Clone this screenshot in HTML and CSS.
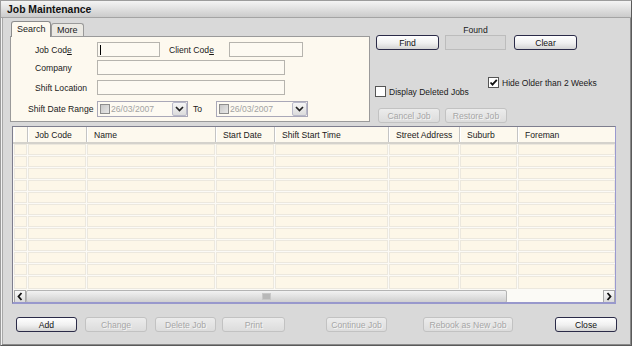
FILE: index.html
```
<!DOCTYPE html>
<html lang="en">
<head>
	<meta charset="UTF-8">
	<title>Job Maintenance</title>
	<link rel="stylesheet" href="styles.css">
</head>
<body>
	<div class="win">
		<div class="title">Job Maintenance</div>
		<div class="top">
			<div class="tabs">
				<div class="tabstrip">
					<span class="tab on">Search</span>
					<span class="tab">More</span>
				</div>
				<div class="panel">
					<div class="row r1">
						<span class="lbl">Job Cod<u>e</u></span>
						<span class="inp w63"><i class="caret"></i></span>
						<span class="lbl2">Client Cod<u>e</u></span>
						<span class="inp w74"></span>
					</div>
					<div class="row r2">
						<span class="lbl">Company</span>
						<span class="inp w188"></span>
					</div>
					<div class="row r3">
						<span class="lbl">Shift Location</span>
						<span class="inp w188"></span>
					</div>
					<div class="row r4">
						<span class="lbl wide">Shift Date Range</span>
						<span class="date w91">
							<i class="dchk"></i><span class="dtxt">26/03/2007</span>
							<span class="ddbtn"><svg width="9" height="6" viewBox="0 0 9 6"><path d="M1 1l3.5 3.5L8 1" stroke="#222" stroke-width="1.7" fill="none"/></svg></span>
						</span>
						<span class="to">To</span>
						<span class="date w92">
							<i class="dchk"></i><span class="dtxt">26/03/2007</span>
							<span class="ddbtn"><svg width="9" height="6" viewBox="0 0 9 6"><path d="M1 1l3.5 3.5L8 1" stroke="#222" stroke-width="1.7" fill="none"/></svg></span>
						</span>
					</div>
				</div>
			</div>
			<div class="side">
				<div class="found-lbl">Found</div>
				<div class="btnrow">
					<span class="btn w63">Find</span>
					<span class="foundbox"></span>
					<span class="btn w63 clear">Clear</span>
				</div>
				<div class="chkrow">
					<span class="chk deleted"><i class="box"></i>Display Deleted Jobs</span>
					<span class="chk older"><i class="box"><svg width="9" height="9" viewBox="0 0 9 9"><path d="M1.5 4.5l2 2.2L7.8 1.8" stroke="#111" stroke-width="1.8" fill="none"/></svg></i>Hide Older than 2 Weeks</span>
				</div>
				<div class="btnrow2">
					<span class="btn off w62">Cancel Job</span>
					<span class="btn off w62 restore">Restore Job</span>
				</div>
			</div>
		</div>

		<div class="grid">
			<table class="gt">
				<colgroup>
					<col style="width:14px"><col style="width:59px"><col style="width:129px"><col style="width:59px">
					<col style="width:114px"><col style="width:71px"><col style="width:58px"><col style="width:98px">
				</colgroup>
				<thead>
					<tr><th></th><th>Job Code</th><th>Name</th><th>Start Date</th><th>Shift Start Time</th><th>Street Address</th><th>Suburb</th><th>Foreman</th></tr>
				</thead>
				<tbody>
					<tr><td></td><td></td><td></td><td></td><td></td><td></td><td></td><td></td></tr>
					<tr><td></td><td></td><td></td><td></td><td></td><td></td><td></td><td></td></tr>
					<tr><td></td><td></td><td></td><td></td><td></td><td></td><td></td><td></td></tr>
					<tr><td></td><td></td><td></td><td></td><td></td><td></td><td></td><td></td></tr>
					<tr><td></td><td></td><td></td><td></td><td></td><td></td><td></td><td></td></tr>
					<tr><td></td><td></td><td></td><td></td><td></td><td></td><td></td><td></td></tr>
					<tr><td></td><td></td><td></td><td></td><td></td><td></td><td></td><td></td></tr>
					<tr><td></td><td></td><td></td><td></td><td></td><td></td><td></td><td></td></tr>
					<tr><td></td><td></td><td></td><td></td><td></td><td></td><td></td><td></td></tr>
					<tr><td></td><td></td><td></td><td></td><td></td><td></td><td></td><td></td></tr>
					<tr><td></td><td></td><td></td><td></td><td></td><td></td><td></td><td></td></tr>
					<tr><td></td><td></td><td></td><td></td><td></td><td></td><td></td><td></td></tr>
				</tbody>
			</table>
			<div class="hscroll">
				<span class="arrow"><svg width="8" height="9" viewBox="0 0 8 9"><path d="M5.5 1L2.5 4.5L5.5 8" stroke="#111" stroke-width="1.8" fill="none"/></svg></span>
				<span class="thumb"><i class="grip"></i></span>
				<span class="track"></span>
				<span class="arrow"><svg width="8" height="9" viewBox="0 0 8 9"><path d="M2.5 1L5.5 4.5L2.5 8" stroke="#111" stroke-width="1.8" fill="none"/></svg></span>
			</div>
		</div>

		<div class="foot">
			<span class="btn w61">Add</span>
			<span class="btn off w62 b-change">Change</span>
			<span class="btn off w61 b-delete">Delete Job</span>
			<span class="btn off w63 b-print">Print</span>
			<span class="btn off w61 b-continue">Continue Job</span>
			<span class="btn off w90 b-rebook">Rebook as New Job</span>
			<span class="btn w62 b-close">Close</span>
		</div>
	</div>
</body>
</html>
```

FILE: styles.css
```
*{
	margin:0px;
	padding:0px;
}
body{
	font:8.6px "Liberation Sans", Arial, sans-serif;
	color:#1a1a1a;
	background:#d8d8d8;
}
.win{
	width:632px;
	height:346px;
	box-sizing:border-box;
	background:#d9d9d9;
	border:1px solid #9c9c9c;
	border-right-color:#5a5a5a;
	border-bottom-color:#5a5a5a;
	box-shadow:inset 1px 1px 0 #f2f2f2, inset -1px -1px 0 #8a8a8a, inset 2px 0 0 #a8a8a8;
	overflow:hidden;
}
.title{
	height:16px;
	line-height:17px;
	padding-left:6px;
	font-size:10.4px;
	font-weight:bold;
	color:#111;
	background:linear-gradient(#f4f4f4, #e2e2e2 45%, #cbcbcb);
	border-bottom:1px solid #a4a4a4;
}

/* top part */
.top{
	display:flex;
	height:108px;
	box-sizing:border-box;
	padding:3px 0 0 9px;
}
.tabs{
	width:360px;
}
.tabstrip{
	display:flex;
	align-items:flex-end;
	height:15px;
	padding-left:1px;
}
.tab{
	height:12px;
	line-height:13px;
	padding:0 5px;
	border:1px solid #9a9a9a;
	border-bottom:none;
	border-radius:3px 3px 0 0;
	background:#ebe9e3;
	font-size:9px;
}
.tab.on{
	height:15px;
	line-height:14px;
	width:28px;
	background:#fdf9ef;
	position:relative;
	z-index:1;
	margin-bottom:-1px;
	border-color:#8c8c8c;
}
.panel{
	height:86px;
	box-sizing:border-box;
	border:1px solid #9a9a9a;
	background:#fdf9ef;
	padding-top:5px;
}
.row{
	display:flex;
	align-items:center;
	height:15px;
}
.r2{ margin-top:3px; }
.r3{ margin-top:5px; }
.r4{ margin-top:6px; }
.lbl{
	width:62px;
	padding-left:24px;
	white-space:nowrap;
}
.lbl.wide{
	width:69px;
	padding-left:17px;
}
.lbl2{
	width:60px;
	margin-left:9px;
	white-space:nowrap;
}
u{
	text-decoration:underline;
}
.inp{
	display:block;
	height:15px;
	box-sizing:border-box;
	border:1px solid #b6b4ae;
	background:#fdfaf2;
}
.caret{
	display:block;
	width:1px;
	height:10px;
	margin:2px 0 0 2px;
	background:#000;
}
.w63{ width:63px; }
.w74{ width:74px; }
.w188{ width:188px; }
.w91{ width:91px; }
.w92{ width:92px; }
.w62{ width:62px; }
.w61{ width:61px; }
.w90{ width:90px; }

.date{
	display:flex;
	align-items:center;
	height:16px;
	box-sizing:border-box;
	border:1px solid #a9a8b8;
	background:#fdfaf2;
	padding-left:2px;
}
.dchk{
	display:block;
	width:8px;
	height:8px;
	border:1px solid #8e8e8e;
	background:linear-gradient(135deg, #c8c8c8, #e8e8e8);
}
.dtxt{
	flex:1;
	color:#a3a3a3;
	padding-left:1px;
}
.ddbtn{
	display:flex;
	align-items:center;
	justify-content:center;
	width:15px;
	height:14px;
	box-sizing:border-box;
	border:1px solid #b9b9c9;
	border-radius:2px;
	background:linear-gradient(#f6f6f6, #dcdcdc);
}
.to{
	width:23px;
	margin-left:5px;
}

/* right controls */
.side{
	margin-left:6px;
	width:240px;
}
.found-lbl{
	height:14px;
	line-height:14px;
	padding-top:2px;
	box-sizing:border-box;
	margin-left:69px;
	width:61px;
	text-align:center;
}
.btnrow{
	display:flex;
}
.btn{
	display:block;
	height:15px;
	line-height:14px;
	box-sizing:border-box;
	text-align:center;
	white-space:nowrap;
	border:1px solid #2b2b48;
	border-radius:3px;
	background:linear-gradient(#ffffff, #f0f0f0 55%, #d4d4d4);
	color:#111;
}
.btn.off{
	border-color:#c2c2c2;
	background:linear-gradient(#ececec, #dcdcdc);
	color:#a6a6a6;
	text-shadow:1px 1px 0 #f6f6f6;
}
.foundbox{
	display:block;
	width:61px;
	height:15px;
	margin-left:6px;
	box-sizing:border-box;
	border:1px solid #bcbcbc;
	background:#d6d6d6;
}
.clear{
	margin-left:8px;
}
.chkrow{
	display:flex;
	align-items:flex-start;
	margin-top:27px;
	height:21px;
}
.chk{
	display:flex;
	align-items:center;
	white-space:nowrap;
}
.chk .box{
	display:flex;
	align-items:center;
	justify-content:center;
	width:11px;
	height:11px;
	box-sizing:border-box;
	border:1px solid #555;
	background:#fff;
	margin-right:3px;
}
.deleted{
	width:113px;
	margin-left:-1px;
	margin-top:9px;
	font-size:8.5px;
}
.older{
	font-size:8.5px;
}
.btnrow2{
	display:flex;
	margin-top:10px;
	padding-left:2px;
}
.restore{
	margin-left:5px;
}

/* grid */
.grid{
	margin-left:11px;
	width:604px;
	height:178px;
	box-sizing:border-box;
	border:1px solid #7e7e8e;
	border-right-color:#9a9ad0;
	border-bottom:2px solid #9898cc;
	background:#fdfaf2;
	display:flex;
	flex-direction:column;
	overflow:hidden;
}
.gt{
	width:602px;
	table-layout:fixed;
	border-collapse:collapse;
	flex:1;
}
.gt th{
	height:16px;
	box-sizing:border-box;
	text-align:left;
	font-weight:normal;
	padding-left:7px;
	background:#fdf9ee;
	border-left:1px solid #c4c4c4;
	box-shadow:inset 1px 0 0 #fff;
	border-bottom:2px solid #d4d2cc;
	white-space:nowrap;
	overflow:hidden;
}
.gt th:first-child{
	border-left:none;
}
.gt td{
	height:11px;
	padding:0;
	border:1px solid #fbfaf6;
	background:#fdf7e8;
	box-shadow:inset 0 0 0 1px #ece8de;
}
.gt tbody tr:last-child td{
	height:13px;
}
.hscroll{
	display:flex;
	height:13px;
	flex:none;
	background:#f3f1ec;
	padding-left:1px;
}
.arrow{
	display:flex;
	align-items:center;
	justify-content:center;
	width:12px;
	height:13px;
	box-sizing:border-box;
	border:1px solid #a8a8a8;
	background:linear-gradient(#fafafa, #dadada);
}
.thumb{
	display:flex;
	align-items:center;
	justify-content:center;
	width:481px;
	height:13px;
	box-sizing:border-box;
	border:1px solid #b4b4b4;
	border-radius:2px;
	background:linear-gradient(#f2f2f2, #dedede 60%, #cfcfcf);
}
.grip{
	display:block;
	width:7px;
	height:5px;
	background:#b8b8b8;
	border:1px solid #c8c8c8;
}
.track{
	flex:1;
	background:#fbfaf6;
}

/* bottom buttons */
.foot{
	display:flex;
	margin-top:13px;
	padding-left:15px;
}
.b-change{ margin-left:8px; }
.b-delete{ margin-left:8px; }
.b-print{ margin-left:6px; }
.b-continue{ margin-left:41px; }
.b-rebook{ margin-left:36px; }
.b-close{ margin-left:42px; }
```
